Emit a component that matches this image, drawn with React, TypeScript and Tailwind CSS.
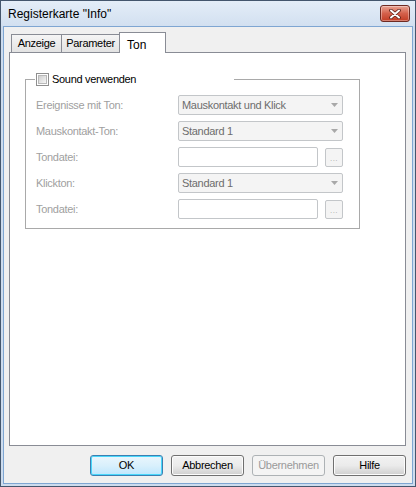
const uiFont = { fontFamily: "'Liberation Sans', Arial, sans-serif", letterSpacing: "-0.3px" };

const rows = [
  { label: "Ereignisse mit Ton:", kind: "combo", value: "Mauskontakt und Klick" },
  { label: "Mauskontakt-Ton:", kind: "combo", value: "Standard 1" },
  { label: "Tondatei:", kind: "file", value: "" },
  { label: "Klickton:", kind: "combo", value: "Standard 1" },
  { label: "Tondatei:", kind: "file", value: "" },
];

function CloseButton() {
  return (
    <div className="w-[30px] h-[17px] rounded-[3px] border border-[#6e2a22] bg-gradient-to-b from-[#e8a393] via-[#d4604b] to-[#c23b22] flex items-center justify-center shadow-[inset_0_0_0_1px_rgba(255,255,255,0.35)]">
      <svg width="12" height="10" viewBox="0 0 12 10">
        <path d="M2 1.5 L10 8.5 M10 1.5 L2 8.5" stroke="#5a2018" strokeWidth="3.6" strokeLinecap="round" />
        <path d="M2 1.5 L10 8.5 M10 1.5 L2 8.5" stroke="#ffffff" strokeWidth="2" strokeLinecap="round" />
      </svg>
    </div>
  );
}

function Combo({ value }: { value: string }) {
  return (
    <div className="w-[165px] h-[20px] rounded-[2px] border border-[#c3c6c9] bg-[#f4f4f4] flex items-center pl-[3px] pr-[4px]">
      <span className="flex-1 text-[#6d6d6d] truncate">{value}</span>
      <svg width="7" height="4" viewBox="0 0 7 4">
        <path d="M0 0 H7 L3.5 4 Z" fill="#a8a8a8" />
      </svg>
    </div>
  );
}

function FileRow() {
  return (
    <div className="flex items-start">
      <div className="w-[140px] h-[20px] rounded-[2px] border border-[#c3c6c9] bg-white" />
      <div className="ml-[7px] mt-[1px] w-[18px] h-[19px] rounded-[2px] border border-[#c3c6c9] bg-[#f4f4f4] flex items-end justify-center pb-[3px]">
        <span className="text-[8px] leading-none text-[#a8a8a8] tracking-[0.5px]">...</span>
      </div>
    </div>
  );
}

function Checkbox() {
  return (
    <div className="w-[13px] h-[13px] border border-[#8f8f8f] bg-white p-[1px]">
      <div className="w-full h-full border border-[#b9b9b9] bg-gradient-to-br from-[#cfcfcf] to-[#f6f6f6]" />
    </div>
  );
}

function DlgButton({ label, variant }: { label: string; variant: "default" | "normal" | "disabled" }) {
  const styles = {
    default: "border-[#3c7fb1] bg-gradient-to-b from-[#eaf6fd] via-[#d9f0fc] to-[#bee6fd] text-black shadow-[inset_0_0_0_1px_#48d7fb]",
    normal: "border-[#707070] bg-gradient-to-b from-[#f2f2f2] via-[#ebebeb] to-[#cfcfcf] text-black shadow-[inset_0_0_0_1px_#fcfcfc]",
    disabled: "border-[#adb2b5] bg-[#f4f4f4] text-[#9a9a9a]",
  };
  return (
    <div className={`w-[73px] h-[21px] rounded-[3px] border flex items-center justify-center ${styles[variant]}`}>
      {label}
    </div>
  );
}

export default function App() {
  return (
    <div className="w-[416px] h-[487px] border border-[#44566d] bg-[#cddcee] flex flex-col text-[11px] text-black" style={uiFont}>
      <div className="h-[25px] shrink-0 flex items-center justify-between pl-[7px] pr-[5px] bg-gradient-to-b from-[#e4edf8] to-[#d2e0f0]">
        <span className="text-[12px] text-black tracking-normal">Registerkarte "Info"</span>
        <CloseButton />
      </div>

      <div className="flex-1 px-[2px] pb-[2px] flex">
        <div className="flex-1 border border-[#7fa6d2] bg-[#f0f0f0] flex flex-col pt-[5px] pl-[5px] pr-[6px] pb-[7px]">
          <div className="h-[20px] shrink-0 flex items-end pl-[2px]">
            <div className="w-[51px] h-[18px] border border-b-0 border-[#898c95] bg-gradient-to-b from-[#f5f5f5] to-[#e3e3e3] flex items-center justify-center">
              Anzeige
            </div>
            <div className="-ml-px w-[59px] h-[18px] border border-b-0 border-[#898c95] bg-gradient-to-b from-[#f5f5f5] to-[#e3e3e3] flex items-center justify-center">
              Parameter
            </div>
            <div className="-ml-px relative z-10 -mb-px w-[47px] h-[21px] border border-b-0 border-[#898c95] bg-white flex items-start pl-[7px] pt-[3px] text-[12px] tracking-normal">
              Ton
            </div>
          </div>

          <div className="flex-1 border border-[#898c95] bg-white pl-[15px] pt-[19px]">
            <fieldset className="w-[335px] h-[157px] border border-[#a9a9a9]">
              <legend className="ml-[9px] w-[199px] h-[14px] flex items-center gap-[3px] pl-[1px]">
                <Checkbox />
                <span>Sound verwenden</span>
              </legend>
              <div className="mt-[9px] pl-[10px] flex flex-col gap-[6px]">
                {rows.map((r, i) => (
                  <div key={i} className="h-[20px] flex items-center">
                    <span className="w-[142px] text-[#a0a0a0]">{r.label}</span>
                    {r.kind === "combo" ? <Combo value={r.value} /> : <FileRow />}
                  </div>
                ))}
              </div>
            </fieldset>
          </div>

          <div className="mt-[9px] flex justify-end gap-[8px]">
            <DlgButton label="OK" variant="default" />
            <DlgButton label="Abbrechen" variant="normal" />
            <DlgButton label="Übernehmen" variant="disabled" />
            <DlgButton label="Hilfe" variant="normal" />
          </div>
        </div>
      </div>
    </div>
  );
}
